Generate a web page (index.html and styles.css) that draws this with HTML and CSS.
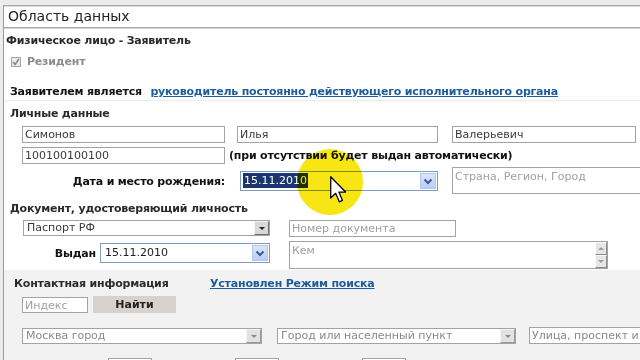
FILE: index.html
```html
<!DOCTYPE html>
<html lang="ru">
<head>
	<meta charset="UTF-8">
	<title>Область данных</title>
	<link rel="stylesheet" href="styles.css">
</head>
<body>
	<div class="wrapper">
		<div class="head">Область данных</div>

		<div class="applicant">
			<h3 class="title">Физическое лицо - Заявитель</h3>
			<div class="resident">
				<span class="check"><svg width="8" height="8" viewBox="0 0 8 8"><path d="M1 4 L3 6.5 L7 1" fill="none" stroke="#8a8a8a" stroke-width="1.6"/></svg></span>
				Резидент
			</div>
			<div class="who">
				<b>Заявителем является</b>
				<a href="#" class="link">руководитель постоянно действующего исполнительного органа</a>
			</div>
		</div>

		<div class="personal">
			<h3 class="title">Личные данные</h3>
			<div class="row">
				<div class="inp w203">Симонов</div>
				<div class="inp w201 ml12">Илья</div>
				<div class="inp w184 ml14">Валерьевич</div>
			</div>
			<div class="row r2">
				<div class="inp w203">100100100100</div>
				<span class="note">(при отсутствии будет выдан автоматически)</span>
			</div>
			<div class="row r3">
				<span class="lbl birth">Дата и место рождения:</span>
				<div class="combo birthdate">
					<span class="sel">15.11.2010</span>
					<span class="drop"><svg width="10" height="7" viewBox="0 0 10 7"><path d="M1.5 1.5 L5 5 L8.5 1.5" fill="none" stroke="#3c5a8c" stroke-width="2"/></svg></span>
				</div>
				<div class="area place">Страна, Регион, Город</div>
			</div>
		</div>

		<div class="document">
			<h3 class="title">Документ, удостоверяющий личность</h3>
			<div class="grid">
				<div class="select">Паспорт РФ<span class="arrow"></span></div>
				<div class="inp ph w167">Номер документа</div>
				<div class="issued">
					<span class="lbl">Выдан</span>
					<div class="combo issuedate">
						15.11.2010
						<span class="drop"><svg width="10" height="7" viewBox="0 0 10 7"><path d="M1.5 1.5 L5 5 L8.5 1.5" fill="none" stroke="#3c5a8c" stroke-width="2"/></svg></span>
					</div>
				</div>
				<div class="area by">
					Кем
					<span class="scroll">
						<span class="sbtn"><i class="up"></i></span>
						<span class="sbtn"><i class="down"></i></span>
					</span>
				</div>
			</div>
		</div>

		<div class="contact">
			<div class="contact-head">
				<h3 class="title">Контактная информация</h3>
				<a href="#" class="link">Установлен Режим поиска</a>
			</div>
			<div class="row">
				<div class="inp ph w66">Индекс</div>
				<button class="find">Найти</button>
			</div>
			<div class="row addr">
				<div class="select w240">Москва город<span class="arrow"></span></div>
				<div class="select w239 ml15">Город или населенный пункт<span class="arrow"></span></div>
				<div class="inp street ml13">Улица, проспект и</div>
			</div>
			<div class="row house">
				<div class="inp w44 ml86"></div>
				<div class="inp w44 ml83"></div>
				<div class="inp w44 ml83"></div>
			</div>
		</div>
	</div>

	<div class="spot"></div>
	<svg class="cursor" width="17" height="27" viewBox="0 0 12 19"><path d="M0.5 0.5 L0.5 15.5 L4 12.2 L6.6 18.2 L8.8 17.2 L6.3 11.3 L11 11.3 Z" fill="#fff" stroke="#000" stroke-width="0.9" stroke-linejoin="round"/></svg>
</body>
</html>
```

FILE: styles.css
```css
*{
	margin: 0;
	padding: 0;
	box-sizing: border-box;
}
body{
	position: relative;
	width: 640px;
	height: 360px;
	overflow: hidden;
	background: #ececec;
	font-family: "DejaVu Sans", Verdana, sans-serif;
	font-size: 11px;
	color: #333;
}
b, .title, .lbl, .note, .link, .resident{
	letter-spacing: -0.2px;
}
.wrapper{
	margin: 5px 0 0 3px;
	border-left: 1px solid #9c9c9c;
	background: #fff;
	height: 360px;
}
.head{
	height: 23px;
	border-top: 1px solid #a9a9a9;
	border-bottom: 1px solid #a9a9a9;
	box-shadow: inset 0 1px 0 #dcdcdc, 0 1px 0 #d6d6d6;
	font-size: 14px;
	line-height: 21px;
	padding-left: 4px;
	color: #222;
}
.title{
	font-size: 11px;
	font-weight: bold;
	line-height: 13px;
	color: #2a2a2a;
}
.link{
	color: #1d5c9c;
	font-weight: bold;
	text-decoration: underline;
}

/* заявитель */
.applicant{
	padding: 6px 0 0 2px;
	height: 72px;
}
.resident{
	display: flex;
	align-items: center;
	margin: 8px 0 0 5px;
	line-height: 13px;
	color: #8c8c8c;
	font-weight: bold;
}
.check{
	display: flex;
	align-items: center;
	justify-content: center;
	width: 10px;
	height: 10px;
	border: 1px solid #a8a8a8;
	background: #ececec;
	margin-right: 6px;
}
.who{
	margin: 17px 0 0 4px;
	line-height: 13px;
	color: #111;
}
.who .link{
	margin-left: 5px;
}

/* личные данные */
.personal{
	border-top: 1px solid #ebebeb;
	padding: 6px 0 0 6px;
	height: 95px;
}
.row{
	display: flex;
	align-items: center;
	margin-top: 6px;
	padding-left: 12px;
}
.row > *, .grid > *{
	flex-shrink: 0;
}
.r2{
	margin-top: 4px;
}
.r3{
	margin-top: 3px;
	align-items: flex-start;
}
.inp{
	height: 17px;
	border: 1px solid #a3a3a3;
	background: #fff;
	line-height: 15px;
	padding-left: 2px;
	color: #3a3a3a;
	white-space: nowrap;
	overflow: hidden;
}
.ph{
	color: #a0a0a0;
}
.w203{ width: 203px; }
.w201{ width: 201px; }
.w184{ width: 184px; }
.w167{ width: 167px; }
.w66{ width: 66px; height: 16px; }
.w44{ width: 44px; }
.w240{ width: 240px; }
.w239{ width: 239px; }
.ml12{ margin-left: 12px; }
.ml13{ margin-left: 13px; }
.ml14{ margin-left: 14px; }
.ml15{ margin-left: 15px; }
.ml83{ margin-left: 83px; }
.ml86{ margin-left: 86px; }
.street{
	width: 120px;
	color: #8a8a8a;
}
.note{
	margin-left: 4px;
	font-weight: bold;
	color: #111;
}
.lbl{
	font-weight: bold;
	color: #111;
	line-height: 13px;
}
.birth{
	width: 203px;
	text-align: right;
	padding-top: 8px;
}
.combo{
	position: relative;
	height: 20px;
	border: 1px solid #7f9db9;
	background: #fff;
	line-height: 18px;
	padding-left: 2px;
	color: #222;
}
.birthdate{
	width: 198px;
	margin: 4px 0 0 15px;
}
.sel{
	background: #1c3470;
	color: #fff;
	padding: 1px 1px;
}
.drop{
	position: absolute;
	right: 1px;
	top: 1px;
	width: 16px;
	height: 16px;
	border: 1px solid #b3c6ee;
	background: linear-gradient(#dbe5fb, #b9cdf6);
	display: flex;
	align-items: center;
	justify-content: center;
}
.area{
	border: 1px solid #a3a3a3;
	background: #fff;
	color: #a0a0a0;
	padding: 2px 0 0 2px;
	line-height: 13px;
}
.place{
	width: 200px;
	height: 27px;
	margin-left: 14px;
}

/* документ */
.document{
	padding: 7px 0 0 6px;
	height: 75px;
}
.grid{
	display: grid;
	grid-template-columns: 247px 319px;
	column-gap: 19px;
	row-gap: 4px;
	margin: 5px 0 0 13px;
}
.select{
	position: relative;
	height: 16px;
	border: 1px solid #a3a3a3;
	background: #fff;
	line-height: 14px;
	padding-left: 3px;
	color: #3a3a3a;
	white-space: nowrap;
}
.arrow{
	position: absolute;
	right: 0;
	top: 0;
	width: 15px;
	height: 14px;
	background: #d8d8d8;
	border: 1px solid;
	border-color: #f4f4f4 #707070 #707070 #f4f4f4;
}
.arrow::after{
	content: "";
	position: absolute;
	left: 4px;
	top: 5px;
	border: 3px solid transparent;
	border-top: 3px solid #222;
	border-bottom: 0;
}
.contact .select{
	color: #8a8a8a;
}
.contact .arrow{
	background: #e2e2e2;
	border-color: #f4f4f4 #9a9a9a #9a9a9a #f4f4f4;
}
.contact .arrow::after{
	border-top-color: #8a8a8a;
}
.issued{
	display: flex;
	align-items: center;
	justify-content: flex-end;
	padding-top: 2px;
	align-self: start;
}
.issuedate{
	width: 170px;
	margin-left: 4px;
	padding-left: 4px;
}
.by{
	position: relative;
	height: 28px;
}
.scroll{
	position: absolute;
	right: 0;
	top: 0;
	width: 12px;
	height: 26px;
	display: flex;
	flex-direction: column;
}
.sbtn{
	position: relative;
	flex: 1;
	background: #e6e6e6;
	border: 1px solid;
	border-color: #fafafa #8c8c8c #8c8c8c #fafafa;
}
.sbtn i{
	position: absolute;
	left: 2px;
	top: 4px;
	border: 3px solid transparent;
}
.sbtn .up{
	border-bottom: 3px solid #9a9a9a;
	border-top: 0;
}
.sbtn .down{
	border-top: 3px solid #9a9a9a;
	border-bottom: 0;
}

/* контакты */
.contact{
	background: #f2f2f2;
	padding: 7px 0 0 10px;
	height: 100px;
}
.contact-head{
	display: flex;
	align-items: center;
}
.contact-head .title{
	width: 196px;
}
.contact .row{
	padding-left: 8px;
	margin-top: 6px;
}
.find{
	width: 83px;
	height: 17px;
	margin-left: 5px;
	border: none;
	background: #d6d3ce;
	font-family: "DejaVu Sans", Verdana, sans-serif;
	font-size: 11px;
	font-weight: bold;
	color: #222;
}
.contact .addr{
	margin-top: 14px;
}
.contact .house{
	margin-top: 14px;
}

.spot{
	position: absolute;
	left: 297px;
	top: 149px;
	width: 66px;
	height: 66px;
	border-radius: 50%;
	background: #f7e614;
	mix-blend-mode: multiply;
}
.cursor{
	position: absolute;
	left: 330px;
	top: 176px;
}
```
